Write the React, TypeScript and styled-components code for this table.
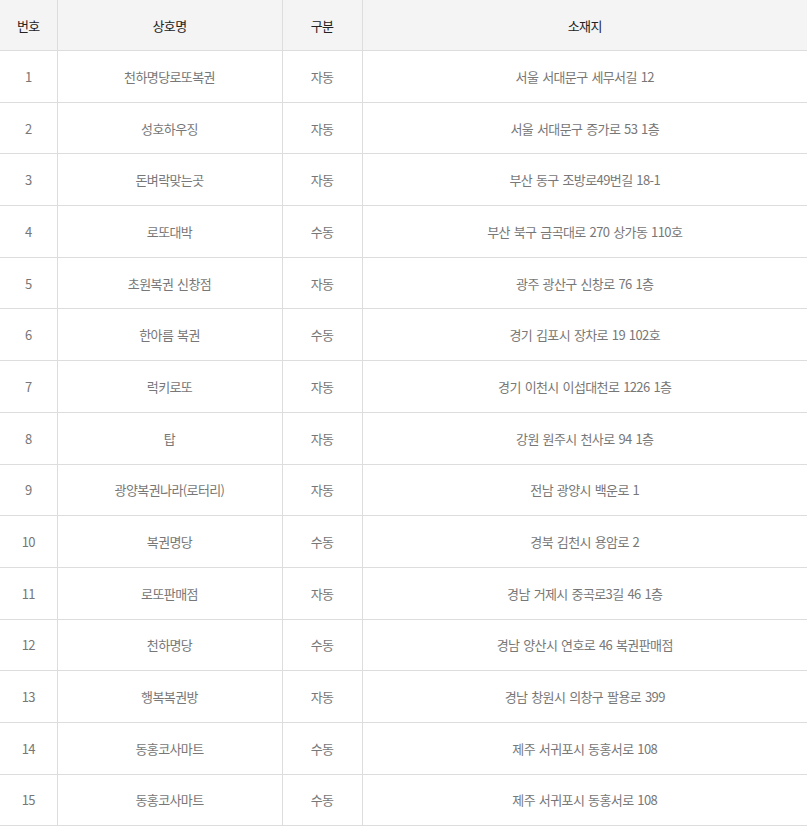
import React from 'react';
import styled, { createGlobalStyle } from 'styled-components';

const GlobalStyle = createGlobalStyle`
  html, body {
    margin: 0;
    padding: 0;
    background: #ffffff;
  }
  body {
    font-family: "Noto Sans CJK KR", "Noto Sans", sans-serif;
  }
`;

type Shop = {
  name: string;
  kind: '자동' | '수동';
  address: string;
};

const shops: Shop[] = [
  { name: '천하명당로또복권', kind: '자동', address: '서울 서대문구 세무서길 12' },
  { name: '성호하우징', kind: '자동', address: '서울 서대문구 증가로 53 1층' },
  { name: '돈벼락맞는곳', kind: '자동', address: '부산 동구 조방로49번길 18-1' },
  { name: '로또대박', kind: '수동', address: '부산 북구 금곡대로 270 상가동 110호' },
  { name: '초원복권 신창점', kind: '자동', address: '광주 광산구 신창로 76 1층' },
  { name: '한아름 복권', kind: '수동', address: '경기 김포시 장차로 19 102호' },
  { name: '럭키로또', kind: '자동', address: '경기 이천시 이섭대천로 1226 1층' },
  { name: '탑', kind: '자동', address: '강원 원주시 천사로 94 1층' },
  { name: '광양복권나라(로터리)', kind: '자동', address: '전남 광양시 백운로 1' },
  { name: '복권명당', kind: '수동', address: '경북 김천시 용암로 2' },
  { name: '로또판매점', kind: '자동', address: '경남 거제시 중곡로3길 46 1층' },
  { name: '천하명당', kind: '수동', address: '경남 양산시 연호로 46 복권판매점' },
  { name: '행복복권방', kind: '자동', address: '경남 창원시 의창구 팔용로 399' },
  { name: '동홍코사마트', kind: '수동', address: '제주 서귀포시 동홍서로 108' },
  { name: '동홍코사마트', kind: '수동', address: '제주 서귀포시 동홍서로 108' },
];

const Table = styled.table`
  width: 100%;
  border-collapse: collapse;
  table-layout: fixed;
  font-size: 13px;
  letter-spacing: -0.6px;
  word-spacing: 1.5px;
`;

const HeadCell = styled.th`
  height: 50px;
  padding: 0;
  background: #f4f4f4;
  color: #222222;
  font-weight: 400;
  text-align: center;
  border-bottom: 1px solid #dddddd;
  border-left: 1px solid #dddddd;
  &:first-child {
    border-left: none;
  }
`;

const Row = styled.tr`
  height: 51.7px;
`;

const Cell = styled.td`
  padding: 0;
  color: #777777;
  text-align: center;
  border-bottom: 1px solid #dddddd;
  border-left: 1px solid #dddddd;
  &:first-child {
    border-left: none;
  }
`;

const App: React.FC = () => (
  <>
    <GlobalStyle />
    <Table>
      <colgroup>
        <col style={{ width: 57 }} />
        <col style={{ width: 225 }} />
        <col style={{ width: 80 }} />
        <col />
      </colgroup>
      <thead>
        <tr>
          <HeadCell>번호</HeadCell>
          <HeadCell>상호명</HeadCell>
          <HeadCell>구분</HeadCell>
          <HeadCell>소재지</HeadCell>
        </tr>
      </thead>
      <tbody>
        {shops.map((shop, i) => (
          <Row key={i}>
            <Cell>{i + 1}</Cell>
            <Cell>{shop.name}</Cell>
            <Cell>{shop.kind}</Cell>
            <Cell>{shop.address}</Cell>
          </Row>
        ))}
      </tbody>
    </Table>
  </>
);

export default App;
